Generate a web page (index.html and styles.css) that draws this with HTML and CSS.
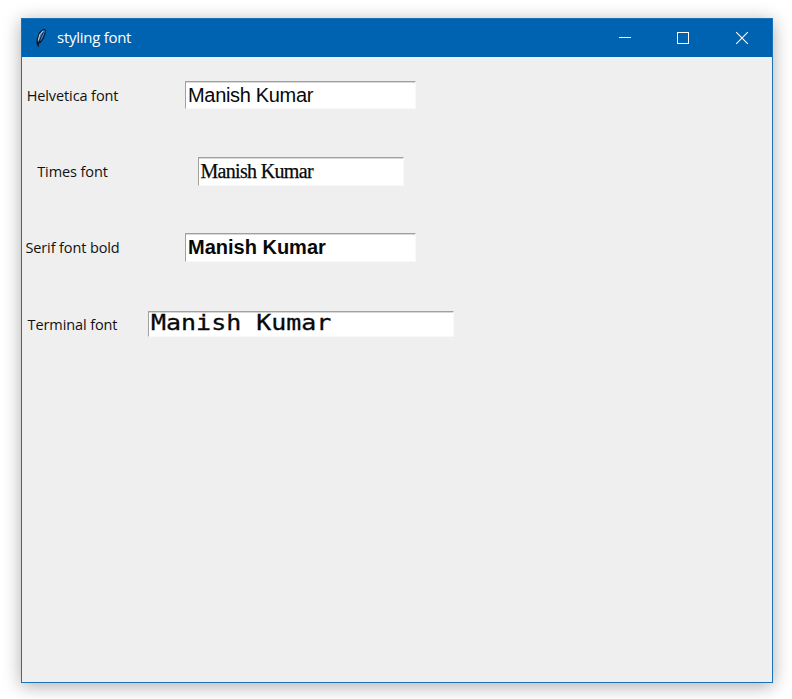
FILE: index.html
```html
<!DOCTYPE html>
<html lang="en">
<head>
<meta charset="utf-8">
<title>styling font</title>
<link rel="stylesheet" href="styles.css">
</head>
<body>
<main class="window">
  <header class="titlebar">
    <svg class="feather" width="14" height="20" viewBox="0 0 14 20">
      <path d="M3.4 18 2.4 15 2.6 11 5 4.5 8.6 1.2 11.5 1 11.7 5 9.5 11 6.5 15 4.8 15.5Z" fill="#071a30"/>
      <path d="M3.8 13.5 5.4 6.2 8.8 2.5 10.8 2.2 10.2 6 8 11 5.3 14Z" fill="#4b86c2"/>
      <path d="M4.2 12.5 5.8 6.5 9 2.8" fill="none" stroke="#b5cce0" stroke-width="1"/>
      <path d="M9.4 4.5 7.2 8.5 4.6 15 4.2 19" fill="none" stroke="#0b1727" stroke-width="1"/>
    </svg>
    <h1 class="title">styling font</h1>
    <div class="controls">
      <svg width="14" height="14" viewBox="0 0 14 14"><path d="M1 6.5H13" stroke="#fff"/></svg>
      <svg width="14" height="14" viewBox="0 0 14 14"><rect x="1.5" y="1.5" width="11" height="11" fill="none" stroke="#fff"/></svg>
      <svg width="14" height="14" viewBox="0 0 14 14"><path d="M1.2 1.2 12.8 12.8M12.8 1.2 1.2 12.8" stroke="#fff" stroke-width="1.1"/></svg>
    </div>
  </header>
  <section class="form">
    <div class="label">Helvetica font</div>
    <div class="entry helvetica"><span>Manish Kumar</span></div>
    <div class="label">Times font</div>
    <div class="entry times"><span>Manish Kumar</span></div>
    <div class="label serif-label">Serif font bold</div>
    <div class="entry bold"><span>Manish Kumar</span></div>
    <div class="label">Terminal font</div>
    <div class="entry terminal"><span>Manish Kumar</span></div>
  </section>
</main>
</body>
</html>
```
FILE: styles.css
```css
* { box-sizing: border-box; }
body {
  margin: 0;
  padding: 18px 0 0 21px;
  height: 699px;
  overflow: hidden;
  background: #fff;
  font-family: "Open Sans", "Noto Sans", sans-serif;
}
.window {
  width: 752px;
  height: 665px;
  border: 1px solid #1a72b8;
  background: #efefef;
  box-shadow: 0 3px 17px rgba(0, 0, 0, .33);
}
.titlebar {
  display: flex;
  align-items: center;
  height: 38px;
  padding-left: 12px;
  background: #0063b1;
  color: #fff;
}
.title {
  margin: 0 0 2px 9px;
  font-size: 15px;
  font-weight: 400;
  letter-spacing: -.27px;
  line-height: 20px;
}
.controls {
  display: flex;
  gap: 44px;
  margin-left: auto;
  padding-right: 23px;
}
.controls svg:last-child { margin-left: 1px; }
.controls svg, .feather { display: block; }
.form {
  display: grid;
  grid-template-columns: 101px 355px;
  grid-template-rows: repeat(4, 76.3px);
  align-items: center;
  justify-items: center;
}
.label {
  padding-top: 1px;
  font-size: 14.5px;
  letter-spacing: -.1px;
  line-height: 20px;
  white-space: nowrap;
  color: #111;
}
.serif-label { letter-spacing: -.12px; }
.entry {
  display: flex;
  align-items: center;
  width: 231px;
  height: 28px;
  padding-left: 2px;
  background: #fff;
  border: 1px solid #f8f8f8;
  border-top-color: #a0a0a0;
  border-left-color: #a0a0a0;
  box-shadow: inset 0 1px #d8d8d8;
  white-space: nowrap;
  color: #080808;
}
.helvetica { font: 20px/24px "Liberation Sans", sans-serif; letter-spacing: -.32px; }
.times { width: 206px; height: 29px; font: 20px/24px "Liberation Serif", serif; letter-spacing: -.68px; -webkit-text-stroke: .25px; }
.bold { height: 29px; font: bold 20px/24px "Liberation Sans", sans-serif; }
.bold span { margin-top: -1px; }
.terminal { width: 306px; height: 26px; margin-top: -1px; font: 22px/24px "DejaVu Sans Mono", monospace; }
.terminal span {
  margin-top: -1px;
  transform: scaleX(1.135);
  transform-origin: left;
  -webkit-text-stroke: .3px;
}
```
